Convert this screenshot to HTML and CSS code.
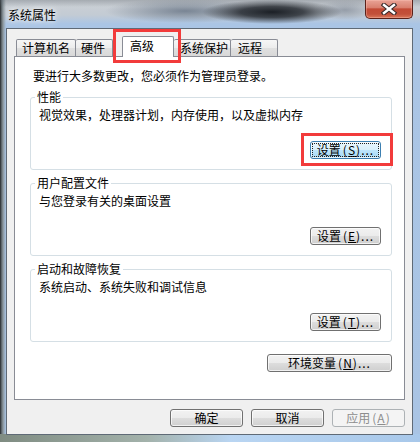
FILE: index.html
```html
<!DOCTYPE html>
<html lang="zh-CN">
<head>
<meta charset="utf-8">
<title>系统属性</title>
<link rel="stylesheet" href="styles.css">
</head>
<body>
<div class="window">
  <div class="titlebar">
    <span class="title">系统属性</span>
    <div class="close">
      <svg width="16" height="12" viewBox="0 0 16 12">
        <path d="M3 2 L13 10 M13 2 L3 10" stroke="#3a2a2a" stroke-width="4.6" stroke-linecap="square" fill="none"/>
        <path d="M3 2 L13 10 M13 2 L3 10" stroke="#ffffff" stroke-width="2.4" stroke-linecap="square" fill="none"/>
      </svg>
    </div>
  </div>
  <div class="client">
    <div class="tabs">
      <div class="tab t1">计算机名</div>
      <div class="tab t2">硬件</div>
      <div class="tab sel">高级<span class="mark mark-tab"></span></div>
      <div class="tab t4">系统保护</div>
      <div class="tab t5">远程</div>
    </div>
    <div class="panel">
      <p class="intro">要进行大多数更改，您必须作为管理员登录。</p>
      <fieldset class="group">
        <legend>性能</legend>
        <p>视觉效果，处理器计划，内存使用，以及虚拟内存</p>
        <div class="actions">
          <span class="anchor"><button class="btn focus">设置<span class="acc">(<u>S</u>)...</span></button><span class="mark mark-btn"></span></span>
        </div>
      </fieldset>
      <fieldset class="group">
        <legend>用户配置文件</legend>
        <p>与您登录有关的桌面设置</p>
        <div class="actions">
          <button class="btn">设置<span class="acc">(<u>E</u>)...</span></button>
        </div>
      </fieldset>
      <fieldset class="group">
        <legend>启动和故障恢复</legend>
        <p>系统启动、系统失败和调试信息</p>
        <div class="actions">
          <button class="btn">设置<span class="acc">(<u>T</u>)...</span></button>
        </div>
      </fieldset>
      <div class="env-row">
        <button class="btn wide">环境变量<span class="acc">(<u>N</u>)...</span></button>
      </div>
    </div>
    <div class="footer">
      <button class="btn foot">确定</button>
      <button class="btn foot">取消</button>
      <button class="btn foot disabled">应用<span class="acc">(<u>A</u>)</span></button>
    </div>
  </div>
</div>
</body>
</html>
```

FILE: styles.css
```css
* { box-sizing: border-box; }
html, body { margin: 0; padding: 0; }
body {
  width: 420px;
  height: 442px;
  overflow: hidden;
  font-family: "Noto Sans CJK SC", "Noto Sans", sans-serif;
  font-size: 12px;
  line-height: 14px;
  color: #000;
}

.window {
  width: 420px;
  height: 442px;
  display: flex;
  flex-direction: column;
  background-color: #a9c4e4;
  background-image:
    radial-gradient(70px 12px at 272px 12px, rgba(18,22,28,.95) 0%, rgba(18,22,28,.75) 45%, rgba(18,22,28,0) 100%),
    radial-gradient(80px 12px at 185px 11px, rgba(70,85,105,.6), rgba(70,85,105,0)),
    radial-gradient(30px 10px at 345px 10px, rgba(100,110,125,.5), rgba(100,110,125,0)),
    linear-gradient(to bottom, rgba(90,100,110,.35) 0, rgba(90,100,110,0) 7px),
    linear-gradient(to right, #7f8c82 0, #a3b2ab 35%, #b9d5f2 55%, #a8c8ea 100%),
    linear-gradient(to right, #1f2225 0, #4f575c 1px, #8b969c 3px, rgba(180,192,204,0) 6px),
    linear-gradient(to bottom, #cdd1d5 0, #c3cbd4 15px, #aac5e5 24px, #a9c4e4 100%);
  background-repeat: no-repeat;
  background-size: 100% 100%, 100% 100%, 100% 100%, 100% 100%, 100% 8px, 100% 100%, 100% 100%;
  background-position: 0 0, 0 0, 0 0, 0 0, 0 100%, 0 0, 0 0;
}

.titlebar {
  flex: none;
  height: 28px;
  display: flex;
  align-items: flex-start;
  padding-left: 8px;
}
.title {
  padding-top: 8px;
  line-height: 14px;
  text-shadow: 0 0 4px #fff, 0 0 8px rgba(255,255,255,.85);
}
.close {
  margin-left: auto;
  margin-right: 7px;
  width: 48px;
  height: 19px;
  border: 1px solid #5b2119;
  border-top: 0;
  border-radius: 0 0 5px 5px;
  background: linear-gradient(to bottom, #e9a396 0%, #d9806f 42%, #c24a35 50%, #c2503a 78%, #d9775a 100%);
  box-shadow: inset 0 0 0 1px rgba(255,200,190,.35);
  display: flex;
  align-items: center;
  justify-content: center;
}
.close svg { display: block; }

.client {
  flex: 1;
  margin: 0 7px 7px 6px;
  border: 1px solid #5f6a76;
  background: #f0f0f0;
  display: flex;
  flex-direction: column;
}

.tabs {
  display: flex;
  align-items: flex-end;
  padding: 7px 0 0 9px;
}
.tab {
  height: 17px;
  border: 1px solid #898c95;
  border-bottom: 0;
  border-radius: 2px 2px 0 0;
  background: linear-gradient(to bottom, #f6f6f6 0%, #ececec 50%, #e0e0e0 51%, #d8d8d8 100%);
  padding-left: 5px;
  line-height: 15px;
  white-space: nowrap;
}
.t1 { width: 60px; }
.t2 { width: 37px; border-left: 0; }
.sel {
  width: 52px;
  height: 21px;
  margin-left: 9px;
  margin-bottom: -1px;
  background: #fff;
  position: relative;
  z-index: 2;
  padding: 2px 0 0 7px;
  line-height: 14px;
}
.t4 { width: 57px; border-left: 0; padding-left: 6px; }
.t5 { width: 47px; border-left: 0; padding-left: 7px; }

.mark {
  position: absolute;
  border: 3px solid #f23b3b;
  pointer-events: none;
}
.mark-tab { top: -8px; left: -10px; right: -8px; bottom: -6px; }
.anchor { position: relative; display: inline-flex; }
.mark-btn { top: -8px; left: -9px; right: -12px; bottom: -7px; }

.panel {
  margin: 0 7px;
  border: 1px solid #898c95;
  background: #fff;
  padding-top: 12px;
}
.intro { margin: 0 0 0 18px; }

.group {
  margin: 7px 12px 0 15px;
  padding: 0 10px 10px 8px;
  border: 1px solid #d5dfe5;
  border-radius: 3px;
  min-width: 0;
}
.group + .group { margin-top: 6px; }
.group legend {
  padding: 0 2px;
  margin-left: -4px;
  line-height: 14px;
}
.group p { margin: 4px 0 0; }
.actions {
  margin-top: 19px;
  display: flex;
  justify-content: flex-end;
}

.btn {
  font: inherit;
  font-size: 12px;
  line-height: 14px;
  color: #000;
  width: 71px;
  height: 18px;
  padding: 0;
  border: 1px solid #707070;
  border-radius: 3px;
  background: linear-gradient(to bottom, #f2f2f2 0%, #ebebeb 50%, #dddddd 51%, #cfcfcf 100%);
  box-shadow: inset 0 0 0 1px rgba(255,255,255,.7);
  white-space: nowrap;
}
.acc { margin-left: 2px; letter-spacing: 1px; }
.btn u { text-underline-offset: 1px; }
.btn.focus {
  border-color: #3c7fb1;
  background: linear-gradient(to bottom, #eaf6fd 0%, #d9f0fc 50%, #bee6fd 51%, #a7d9f5 100%);
  outline: 1px dotted #222;
  outline-offset: -3px;
}
.env-row {
  display: flex;
  justify-content: flex-end;
  margin: 12px 12px 27px 0;
}
.btn.wide { width: 125px; }

.footer {
  display: flex;
  justify-content: flex-end;
  gap: 8px;
  margin: 9px 7px 0 0;
}
.btn.foot { width: 73px; }
.btn.disabled {
  color: #8d8d8d;
  border-color: #adb2b5;
  background: #f4f4f4;
  box-shadow: none;
}
```
